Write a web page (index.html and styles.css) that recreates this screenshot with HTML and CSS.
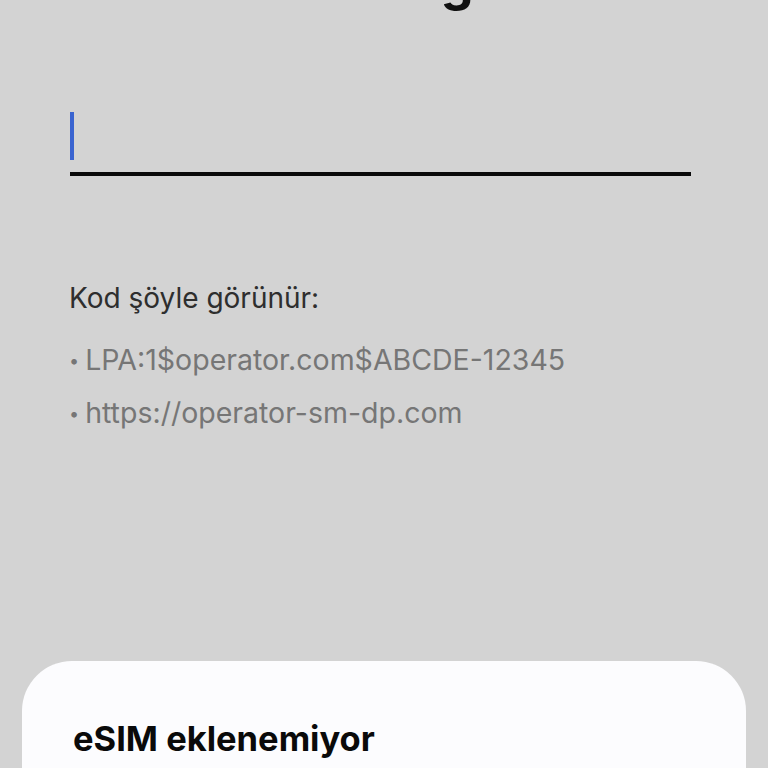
FILE: index.html
```html
<!DOCTYPE html>
<html lang="tr">
<head>
<meta charset="utf-8">
<link rel="stylesheet" href="styles.css">
</head>
<body>
<div class="screen">
  <h1 class="title">Kodu girin</h1>
  <div class="field">
    <span class="cursor"></span>
  </div>
  <div class="hint">
    <p class="hint-head">Kod şöyle görünür:</p>
    <ul class="examples">
      <li>LPA:1$operator.com$ABCDE-12345</li>
      <li>https://operator-sm-dp.com</li>
    </ul>
  </div>
  <div class="sheet">
    <h2 class="sheet-title">eSIM eklenemiyor</h2>
  </div>
</div>
</body>
</html>
```
FILE: styles.css
```css
html, body {
  margin: 0;
  padding: 0;
  background: #d3d3d3;
}
.screen {
  width: 768px;
  height: 768px;
  overflow: hidden;
  display: flex;
  flex-direction: column;
  font-family: Inter, Roboto, "Noto Sans", sans-serif;
}
.title {
  margin: -49px 0 0 0;
  height: 62px;
  padding-left: 296px;
  font-size: 52px;
  line-height: 62px;
  font-weight: 700;
  color: #111;
  white-space: nowrap;
}
.field {
  margin: 99px 77px 0 70px;
  height: 60px;
  border-bottom: 4px solid #0a0a0a;
  display: flex;
  align-items: flex-start;
}
.cursor {
  width: 4px;
  height: 48px;
  background: #3a64d0;
}
.hint {
  margin: 106px 0 0 69px;
}
.hint-head {
  margin: 0;
  font-size: 28px;
  line-height: 32px;
  color: #2e2e2e;
}
.examples {
  list-style: none;
  margin: 20px 0 0 0;
  padding: 0;
  color: #767676;
  font-size: 28.5px;
  line-height: 52px;
}
.examples li::before {
  content: "•";
  font-size: 18px;
  margin-right: 6px;
  vertical-align: 3px;
}
.sheet {
  margin: auto 22px 0 22px;
  height: 107px;
  background: #fcfcfe;
  border-radius: 50px 50px 0 0;
  padding: 56px 0 0 51px;
  box-sizing: border-box;
}
.sheet-title {
  margin: 0;
  font-size: 34.5px;
  line-height: 44px;
  font-weight: 700;
  color: #0a0a0a;
}
```
